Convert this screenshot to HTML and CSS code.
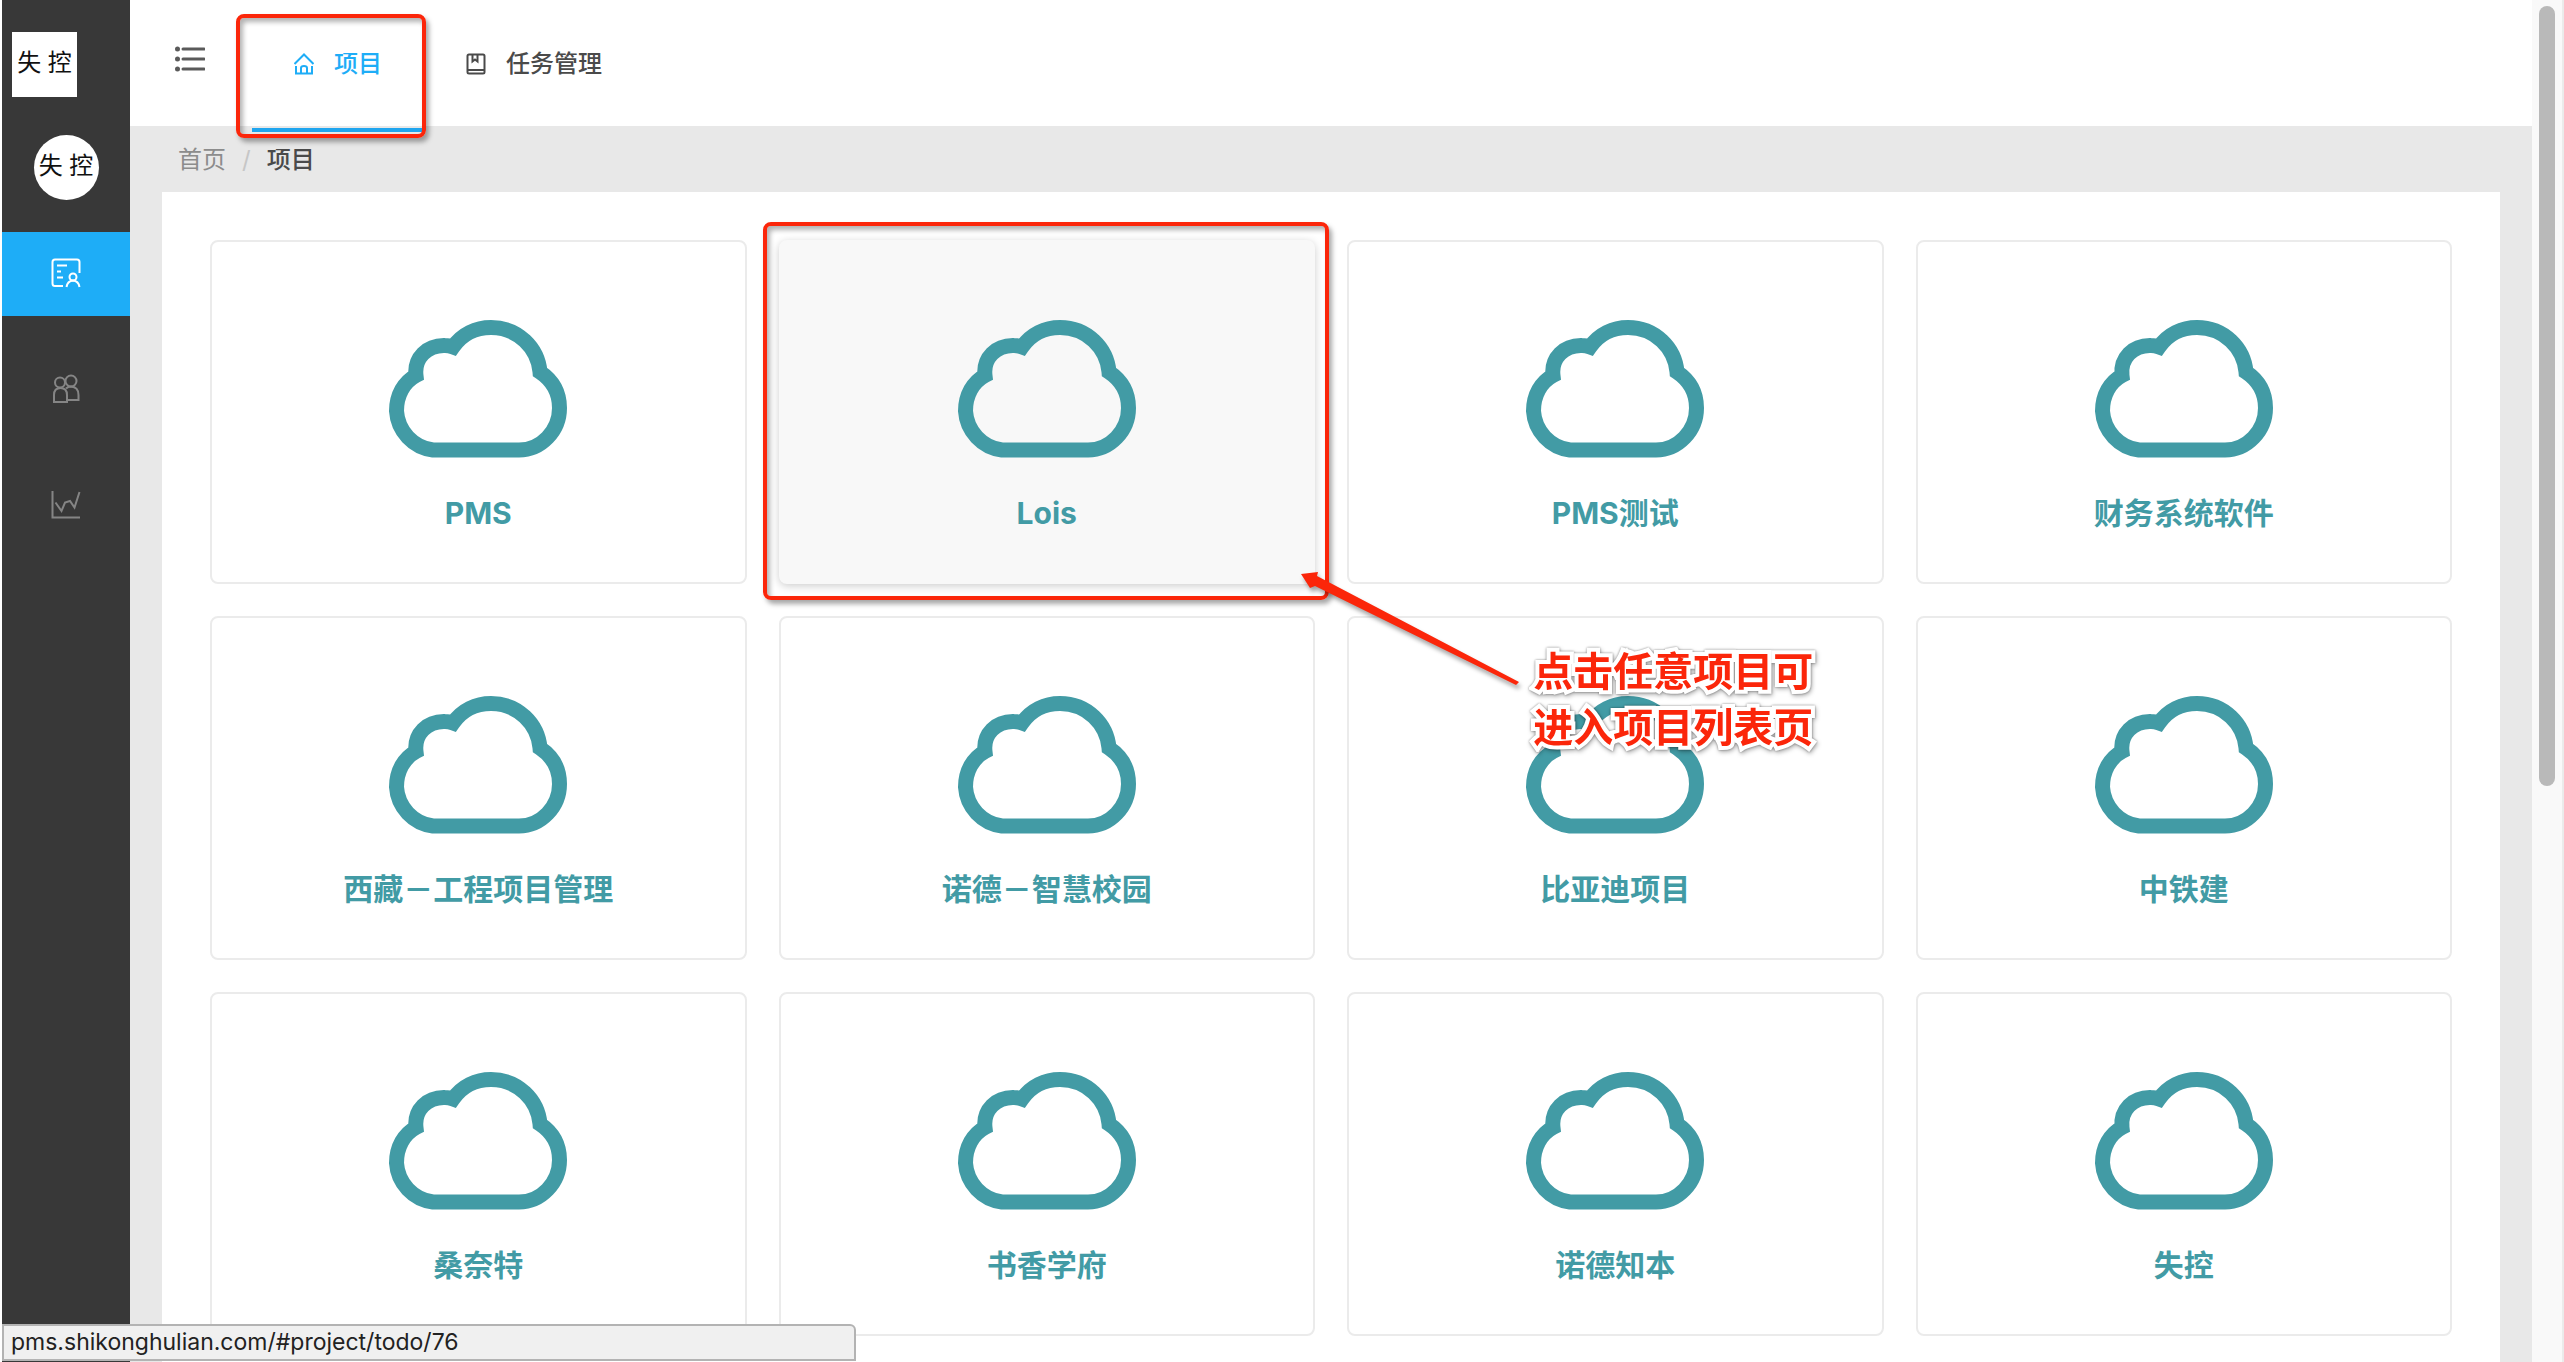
FILE: index.html
```html
<!DOCTYPE html>
<html lang="zh-CN">
<head>
<meta charset="utf-8">
<title>项目</title>
<link rel="stylesheet" href="styles.css">
</head>
<body>
<svg class="defs" aria-hidden="true">
  <symbol id="cloud" viewBox="0 0 178 138">
    <path d="M44 130 A42 42 0 0 1 7.500 91 C7.500 75 15 62 27 55.500 C25 38 38 25 56 25.500 Q60 25.500 64 27 C73 14 87 7.500 102 7.500 C129 7.500 149 28 151 52 C163 60 170.500 72 170.500 88 C170.500 111 152 130 130 130 Z" fill="none" stroke="currentColor" stroke-width="15"/>
  </symbol>
</svg>
<div class="app">
  <aside class="sidebar">
    <a class="logo" href="#">失 控</a>
    <a class="avatar" href="#user">失 控</a>
    <nav class="side-nav">
      <a class="side-link is-active" href="#project" aria-label="项目">
        <svg viewBox="0 0 30 30"><path d="M12 28H4Q1.500 28 1.500 25.500V4Q1.500 1.500 4 1.500H26Q28.500 1.500 28.500 4V15M6 7.500H16M6 13.500H10M6 19.500H12"/><circle cx="22" cy="19" r="3.500"/><path d="M15.500 29Q16.500 23 22 22.500Q27.500 23 28.500 29"/></svg>
      </a>
      <a class="side-link" href="#team" aria-label="成员">
        <svg viewBox="0 0 30 30"><circle cx="9" cy="8.500" r="5"/><circle cx="20" cy="7" r="5.500"/><path d="M3 28V21Q3 14 9.500 14Q16 14 16 21V28ZM15 14.500Q17 12.500 20 12.500Q27.500 13 27.500 21V26H16"/></svg>
      </a>
      <a class="side-link" href="#stats" aria-label="统计">
        <svg viewBox="0 0 30 30"><path d="M1.500 1V27.500H29M4.500 12.500L10.500 21L14 12.500L19 11L23.500 17.500L28.500 2"/></svg>
      </a>
    </nav>
  </aside>
  <div class="main">
    <header class="topbar">
      <button class="menu" type="button" aria-label="菜单">
        <svg viewBox="0 0 30 26"><path d="M8 3H29M8 13H29M8 23H29"/><path class="dots" d="M2.500 3H2.500M2.500 13H2.500M2.500 23H2.500"/></svg>
      </button>
      <nav class="tabs">
        <a class="tab is-active" href="#project">
          <svg viewBox="0 0 20 22"><path d="M0.500 11L10 1.500L19.500 11M2 13V20.500H18V13M7 20V15Q7 13 10 13Q13 13 13 15V20"/></svg>
          项目
        </a>
        <a class="tab" href="#task">
          <svg viewBox="0 0 20 22"><path d="M3 1.500H17Q18.500 1.500 18.500 3V19Q18.500 20.500 17 20.500H3Q1.500 20.500 1.500 19V3Q1.500 1.500 3 1.500ZM2 17H18M6.500 2V8.500L9 6.500L11.500 8.500V2"/></svg>
          任务管理
        </a>
      </nav>
    </header>
    <nav class="crumbs"><a href="#">首页</a><span class="slash">/</span><strong>项目</strong></nav>
    <main class="panel">
      <a class="card" href="#project/todo/75"><svg class="cloud"><use href="#cloud"/></svg><h2>PMS</h2></a>
      <a class="card is-hover" href="#project/todo/76"><svg class="cloud"><use href="#cloud"/></svg><h2>Lois</h2>
        <span class="mark"></span>
        <svg class="arrow" viewBox="0 0 220 114"><path d="M0 2L17 0L16 4L218 110L215 113L14 14L9 16Z"/></svg>
      </a>
      <a class="card" href="#project/todo/77"><svg class="cloud"><use href="#cloud"/></svg><h2>PMS测试</h2></a>
      <a class="card" href="#project/todo/78"><svg class="cloud"><use href="#cloud"/></svg><h2>财务系统软件</h2></a>
      <a class="card" href="#project/todo/79"><svg class="cloud"><use href="#cloud"/></svg><h2>西藏－工程项目管理</h2></a>
      <a class="card" href="#project/todo/80"><svg class="cloud"><use href="#cloud"/></svg><h2>诺德－智慧校园</h2></a>
      <a class="card" href="#project/todo/81"><svg class="cloud"><use href="#cloud"/></svg><h2>比亚迪项目</h2>
        <span class="note">点击任意项目可<br>进入项目列表页</span>
      </a>
      <a class="card" href="#project/todo/82"><svg class="cloud"><use href="#cloud"/></svg><h2>中铁建</h2></a>
      <a class="card" href="#project/todo/83"><svg class="cloud"><use href="#cloud"/></svg><h2>桑奈特</h2></a>
      <a class="card" href="#project/todo/84"><svg class="cloud"><use href="#cloud"/></svg><h2>书香学府</h2></a>
      <a class="card" href="#project/todo/85"><svg class="cloud"><use href="#cloud"/></svg><h2>诺德知本</h2></a>
      <a class="card" href="#project/todo/86"><svg class="cloud"><use href="#cloud"/></svg><h2>失控</h2></a>
    </main>
  </div>
  <div class="scroll"><div class="thumb"></div></div>
</div>
<div class="status">pms.shikonghulian.com/#project/todo/76</div>
</body>
</html>
```
FILE: styles.css
```css
* { box-sizing: border-box; }
body {
  margin: 0;
  background: #fff;
  color: #4a4a4a;
  font: 24px/36px Inter, "Noto Sans CJK SC", sans-serif;
}
a { color: inherit; text-decoration: none; }
svg { display: block; }
.defs { position: absolute; width: 0; height: 0; }

.app {
  display: flex;
  min-height: 100vh;
  padding-left: 2px;
}

.sidebar {
  flex: none;
  width: 128px;
  padding-top: 32px;
  background: #383838;
}
.logo, .avatar {
  display: flex;
  align-items: center;
  justify-content: center;
  width: 65px;
  height: 65px;
  padding-bottom: 3px;
  background: #fff;
  color: #111;
  font-size: 24px;
  white-space: nowrap;
}
.logo { margin-left: 10px; }
.avatar { margin: 38px auto 0; border-radius: 50%; }
.side-nav {
  display: grid;
  gap: 32px;
  margin-top: 32px;
}
.side-link {
  display: flex;
  align-items: center;
  justify-content: center;
  height: 84px;
  padding-bottom: 3px;
  color: #858585;
}
.side-link.is-active { background: #1eadf7; color: #fff; }
.side-link svg {
  width: 30px;
  height: 30px;
  fill: none;
  stroke: currentColor;
  stroke-width: 2;
}

.main { flex: 1; min-width: 0; background: #e8e8e8; }
.topbar {
  display: flex;
  height: 126px;
  padding-left: 45px;
  background: #fff;
}
.menu {
  width: 32px;
  height: 118px;
  padding: 0;
  border: 0;
  background: none;
  color: #5a5a5a;
}
.menu svg {
  width: 30px;
  height: 26px;
  fill: none;
  stroke: currentColor;
  stroke-width: 3;
  stroke-linecap: round;
}
.menu .dots { stroke-width: 5; }
.tabs { display: flex; margin-left: 45px; }
.tab {
  position: relative;
  display: flex;
  align-items: center;
  gap: 20px;
  height: 132px;
  padding: 0 42px;
  border-bottom: 4px solid transparent;
  font-weight: 500;
}
.tab svg { width: 20px; height: 22px; fill: none; stroke: currentColor; stroke-width: 2; }
.tab.is-active { border-color: #1fa5ee; color: #1eadf7; }
.tab.is-active::after {
  content: "";
  position: absolute;
  inset: 14px -2px -10px -16px;
  border: 4px solid #fb260a;
  border-radius: 8px;
  box-shadow: 3px 4px 5px rgba(0, 0, 0, .35), inset 3px 4px 5px rgba(0, 0, 0, .3);
}

.crumbs {
  display: flex;
  align-items: center;
  height: 66px;
  padding: 2px 0 0 48px;
  color: #8c8c8c;
}
.slash { margin: 0 16px; color: #c6c6c6; }
.crumbs strong { color: #4a4a4a; font-weight: 500; }

.panel {
  display: grid;
  grid-template-columns: repeat(4, 1fr);
  gap: 32px;
  margin: 0 32px;
  padding: 48px 48px 26px;
  background: #fff;
}
.card {
  position: relative;
  display: flex;
  flex-direction: column;
  align-items: center;
  height: 344px;
  padding-top: 78px;
  border: 2px solid #ebebeb;
  border-radius: 8px;
  color: #429ba5;
}
.card.is-hover {
  z-index: 1;
  border-color: #f8f8f8;
  background: #f8f8f8;
  box-shadow: 0 2px 8px rgba(0, 0, 0, .2);
}
.cloud { width: 178px; height: 138px; }
.card h2 {
  margin: 33px 0 0;
  font-size: 30px;
  line-height: 44px;
  font-weight: 700;
}

.mark {
  position: absolute;
  inset: -20px -16px -18px -18px;
  border: 4px solid #fb260a;
  border-radius: 8px;
  box-shadow: 3px 4px 5px rgba(0, 0, 0, .35), inset 3px 4px 5px rgba(0, 0, 0, .3);
}
.arrow {
  position: absolute;
  right: -208px;
  bottom: -104px;
  width: 220px;
  height: 114px;
  overflow: visible;
  fill: #fb260a;
  filter: drop-shadow(2px 4px 2px rgba(0, 0, 0, .35));
}
.note {
  position: absolute;
  top: 26px;
  left: 50%;
  margin-left: -82px;
  color: #fb260a;
  font-size: 40px;
  line-height: 56px;
  font-weight: 700;
  white-space: nowrap;
  -webkit-text-stroke: 8px #fff;
  paint-order: stroke fill;
  filter: drop-shadow(0 0 1px rgba(0, 0, 0, .4)) drop-shadow(1px 2px 2px rgba(0, 0, 0, .3));
}

.scroll {
  flex: none;
  width: 32px;
  padding: 6px 7px 0;
  border-right: 2px solid #ebebeb;
  background: #f9f9f9;
}
.thumb {
  width: 16px;
  height: 780px;
  border-radius: 8px;
  background: #b9b9b9;
}

.status {
  position: fixed;
  left: 2px;
  bottom: 1px;
  width: 854px;
  height: 37px;
  padding-left: 7px;
  border: 2px solid #b3b3b3;
  border-radius: 0 6px 0 0;
  background: #f0f0f0;
  color: #222;
  font-size: 23px;
  line-height: 32px;
}
```
